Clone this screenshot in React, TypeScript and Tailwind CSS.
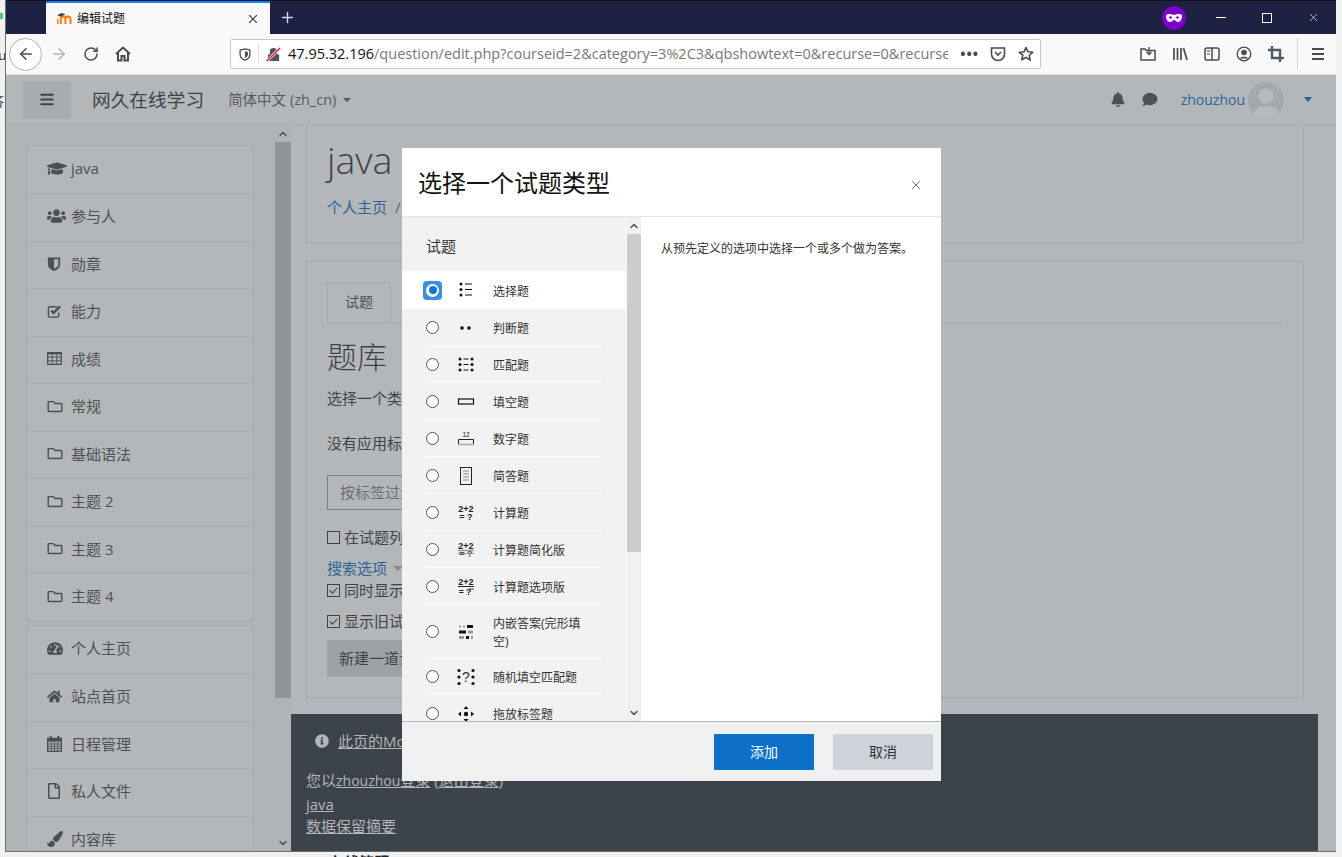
import { useState } from 'react'
import {
  FaBars, FaBell, FaComment, FaGraduationCap, FaHome, FaInfoCircle, FaPaintBrush,
  FaRegFile, FaRegFolder, FaTachometerAlt, FaUsers,
} from 'react-icons/fa'
import { ArrowLeft, ArrowRight, ChevronDown, ChevronUp, Plus, RotateCw, X } from 'lucide-react'

const sans = "font-['Open_Sans','Noto_Sans_CJK_SC',sans-serif]"

function ShieldHalf() {
  return (
    <svg viewBox="0 0 16 18" className="h-[16px] w-[14px]">
      <path d="M1 1.500h14v7.500c0 4-3 6.500-7 8-4-1.500-7-4-7-8z" fill="#4b4f54" />
      <path d="M8 3.500h5V9c0 2.500-2 4-5 5.500z" fill="#b3b7ba" />
    </svg>
  )
}

function CheckSquareIcon() {
  return (
    <svg viewBox="0 0 16 16" className="h-[15px] w-[15px]">
      <path d="M12.500 9v3.500a1.500 1.500 0 01-1.500 1.500H3a1.500 1.500 0 01-1.500-1.500v-8A1.500 1.500 0 013 3h8" fill="none" stroke="#4b4f54" strokeWidth="1.500" />
      <path d="M4.500 7l2.500 2.500L14 2.500" fill="none" stroke="#4b4f54" strokeWidth="2.500" />
    </svg>
  )
}

function TableIcon() {
  return (
    <svg viewBox="0 0 16 14" className="h-[13px] w-[15px]">
      <rect x="0.700" y="0.700" width="14.600" height="12.600" fill="none" stroke="#4b4f54" strokeWidth="1.400" />
      <path d="M0.700 1.500h14.600" stroke="#4b4f54" strokeWidth="2" />
      <path d="M1 5.500h14M1 9.500h14M5.500 1v12M10.500 1v12" stroke="#4b4f54" strokeWidth="1" />
    </svg>
  )
}

function CalendarIcon() {
  return (
    <svg viewBox="0 0 16 17" className="h-[16px] w-[15px]">
      <rect x="0.700" y="2.500" width="14.600" height="13.800" fill="none" stroke="#4b4f54" strokeWidth="1.400" />
      <path d="M1 4.500h14" stroke="#4b4f54" strokeWidth="3" />
      <path d="M4 0v4M12 0v4" stroke="#4b4f54" strokeWidth="2" />
      <path d="M1 8.500h14M1 11h14M1 13.500h14M4.500 6v10M8 6v10M11.500 6v10" stroke="#4b4f54" strokeWidth="0.900" />
    </svg>
  )
}

const courseLinks = [
  { icon: <FaGraduationCap className="h-[17px] w-[20px]" />, label: 'java' },
  { icon: <FaUsers className="h-[16px] w-[19px]" />, label: '参与人' },
  { icon: <ShieldHalf />, label: '勋章' },
  { icon: <CheckSquareIcon />, label: '能力' },
  { icon: <TableIcon />, label: '成绩' },
  { icon: <FaRegFolder className="h-[15px] w-[16px]" />, label: '常规' },
  { icon: <FaRegFolder className="h-[15px] w-[16px]" />, label: '基础语法' },
  { icon: <FaRegFolder className="h-[15px] w-[16px]" />, label: '主题 2' },
  { icon: <FaRegFolder className="h-[15px] w-[16px]" />, label: '主题 3' },
  { icon: <FaRegFolder className="h-[15px] w-[16px]" />, label: '主题 4' },
]

const siteLinks = [
  { icon: <FaTachometerAlt className="h-[15px] w-[16px]" />, label: '个人主页' },
  { icon: <FaHome className="h-[15px] w-[15px]" />, label: '站点首页' },
  { icon: <CalendarIcon />, label: '日程管理' },
  { icon: <FaRegFile className="h-[16px] w-[14px]" />, label: '私人文件' },
  { icon: <FaPaintBrush className="h-[16px] w-[16px]" />, label: '内容库' },
]

function SideBlock({ items }: { items: typeof courseLinks }) {
  return (
    <div className="border border-[#a5a9ac] bg-[#b3b7ba]">
      {items.map((item, i) => (
        <div
          key={item.label}
          className={`flex shrink-0 items-center pb-[2px] pl-[20px] text-[15px] text-[#4d5155] ${i > 0 ? 'h-[47.5px] border-t border-[#a5a9ac]' : 'h-[47px]'}`}
        >
          <span className="flex w-[24px] shrink-0 text-[#4b4f54]">{item.icon}</span>
          {item.label}
        </div>
      ))}
    </div>
  )
}

function Check({ checked }: { checked?: boolean }) {
  return (
    <span className="mr-[4px] flex h-[13px] w-[13px] shrink-0 items-center justify-center border border-[#3e4144]">
      {checked && (
        <svg viewBox="0 0 12 12" className="h-[11px] w-[11px]">
          <path d="M2 6l3 3 5-6" fill="none" stroke="#3e4144" strokeWidth="1.200" />
        </svg>
      )}
    </span>
  )
}

const dots = (pts: number[][], r = 1.500, fill = '#111') =>
  pts.map(([x, y]) => <circle key={`${x}-${y}`} cx={x} cy={y} r={r} fill={fill} />)

const qIcons: Record<string, React.ReactNode> = {
  multi: (
    <>
      {dots([[5, 4], [5, 9.500], [5, 15]])}
      <path d="M9 4h7M9 9.500h7M9 15h7" stroke="#111" strokeWidth="1" />
    </>
  ),
  tf: <>{dots([[6, 10], [13, 10]], 1.800)}</>,
  match: (
    <>
      {dots([[4, 4], [4, 9.500], [4, 15], [16, 4], [16, 9.500], [16, 15]])}
      <path d="M7.500 4h5M7.500 9.500h5M7.500 15h5" stroke="#111" strokeWidth="1" />
    </>
  ),
  short: <rect x="2.500" y="7" width="15" height="5" fill="none" stroke="#111" strokeWidth="1.200" />,
  num: (
    <>
      <text x="10" y="8" textAnchor="middle" fontSize="6.500" fill="#222" fontFamily="Liberation Sans, sans-serif">12</text>
      <path d="M2.500 15V10.500h15V15" fill="none" stroke="#222" strokeWidth="1" />
      <path d="M2 15.500h16" stroke="#aaa" strokeWidth="1.500" />
    </>
  ),
  essay: (
    <>
      <rect x="4.500" y="1.500" width="11" height="17" fill="none" stroke="#222" strokeWidth="1" />
      <path d="M7 5h6M7 8h6M7 11h6M7 14h6" stroke="#888" strokeWidth="1" />
    </>
  ),
  calc: (
    <>
      <text x="10" y="8.500" textAnchor="middle" fontSize="9" fontWeight="700" fill="#222" fontFamily="Liberation Sans, sans-serif">2+2</text>
      <text x="10" y="17" textAnchor="middle" fontSize="9" fontWeight="700" fill="#222" fontFamily="Liberation Sans, sans-serif">= ?</text>
    </>
  ),
  calcs: (
    <>
      <text x="10" y="8.500" textAnchor="middle" fontSize="9" fontWeight="700" fill="#222" fontFamily="Liberation Sans, sans-serif">2+2</text>
      <path d="M2 10.500h16" stroke="#999" strokeWidth="1.500" />
      <text x="10" y="17" textAnchor="middle" fontSize="9" fontWeight="700" fill="#555" fontFamily="Liberation Sans, sans-serif">= ?</text>
      <path d="M2 13.500h16" stroke="#999" strokeWidth="1" />
    </>
  ),
  calcm: (
    <>
      <text x="10" y="8" textAnchor="middle" fontSize="9" fontWeight="700" fill="#222" fontFamily="Liberation Sans, sans-serif">2+2</text>
      <path d="M2 9.500h16" stroke="#222" strokeWidth="1" />
      <path d="M13 12h5" stroke="#999" strokeWidth="2" />
      <text x="9" y="18" textAnchor="middle" fontSize="8.500" fontWeight="700" fill="#222" fontFamily="Liberation Sans, sans-serif">= ?</text>
    </>
  ),
  cloze: (
    <>
      <path d="M3 3.500h2v2H3zM7 3.500h2v2H7z" fill="#999" />
      <path d="M11 3h6v3h-6z" fill="#111" />
      <path d="M3 8.500h7v3H3z" fill="#111" />
      <path d="M12 8.500h5v3h-5z" fill="#999" />
      <path d="M3 14h5v3H3z" fill="#999" />
      <path d="M10 14h3v3h-3z" fill="#111" />
      <path d="M15 14h2v3h-2z" fill="#999" />
    </>
  ),
  rand: (
    <>
      {dots([[3, 3.500], [3, 10], [3, 16.500], [17, 3.500], [17, 10], [17, 16.500]], 1.600)}
      <text x="10" y="15" textAnchor="middle" fontSize="14" fill="#333" fontFamily="Liberation Sans, sans-serif">?</text>
    </>
  ),
  move: (
    <>
      <path d="M10 2l2.500 3h-5zM10 18l2.500-3h-5zM2 10l3-2.500v5zM18 10l-3-2.500v5z" fill="#111" />
      <circle cx="10" cy="10" r="2.200" fill="#111" />
    </>
  ),
}

const questionTypes = [
  { id: 'multi', label: '选择题', h: 'h-[38px]' },
  { id: 'tf', label: '判断题', h: 'h-[37px]' },
  { id: 'match', label: '匹配题', h: 'h-[37px]' },
  { id: 'short', label: '填空题', h: 'h-[37px]' },
  { id: 'num', label: '数字题', h: 'h-[37px]' },
  { id: 'essay', label: '简答题', h: 'h-[37px]' },
  { id: 'calc', label: '计算题', h: 'h-[37px]' },
  { id: 'calcs', label: '计算题简化版', h: 'h-[37px]' },
  { id: 'calcm', label: '计算题选项版', h: 'h-[37px]' },
  { id: 'cloze', label: '内嵌答案(完形填空)', h: 'h-[53px]' },
  { id: 'rand', label: '随机填空匹配题', h: 'h-[37px]' },
  { id: 'move', label: '拖放标签题', h: 'h-[37px]' },
]

function QuestionRow({ q, selected }: { q: (typeof questionTypes)[number]; selected: boolean }) {
  return (
    <div className={`relative flex shrink-0 items-center pl-[24px] ${q.h} ${selected ? 'bg-white' : ''}`}>
      {selected ? (
        <span className="-ml-[3px] mr-[-3px] flex h-[19px] w-[19px] shrink-0 items-center justify-center rounded-[4px] bg-[#3d8fdd]">
          <span className="flex h-[13px] w-[13px] items-center justify-center rounded-full bg-white">
            <span className="h-[8px] w-[8px] rounded-full bg-[#1476d2]" />
          </span>
        </span>
      ) : (
        <span className="h-[13px] w-[13px] shrink-0 rounded-full border border-[#555] bg-white" />
      )}
      <svg viewBox="0 0 20 20" className="ml-[17px] h-[20px] w-[20px] shrink-0">
        {qIcons[q.id]}
      </svg>
      <span className={`ml-[17px] w-[100px] text-[12px] leading-[18px] text-[#333] ${selected ? 'pt-[4px]' : 'pt-[2px]'}`}>{q.label}</span>
      {q.id !== 'multi' && q.id !== 'move' && (
        <span className="absolute bottom-0 left-[24px] h-px w-[175px] bg-white" />
      )}
    </div>
  )
}

function MoodleFavicon() {
  return (
    <svg viewBox="0 0 16 14" className="h-[13px] w-[15px]">
      <path d="M4 13V7.500C4 6 5 5 6.500 5S9 6 9 7.500V13M9 7.500C9 6 10 5 11.500 5S14.500 6 14.500 7.500V13" fill="none" stroke="#f98012" strokeWidth="2.200" />
      <path d="M0.500 7V13" stroke="#f98012" strokeWidth="2" />
      <path d="M0 3.500L5 1l4 1.500-5 2.500z" fill="#444" />
    </svg>
  )
}

function BrowserChrome() {
  const c = '#4a4a4f'
  return (
    <>
      <div className="flex h-[34px] shrink-0 border-t border-[#111] bg-[#1e2142]">
        <div className="w-[40px] shrink-0" />
        <div className="flex w-[224px] shrink-0 items-center border-t-2 border-[#0a84ff] bg-[#f9f9fa] pl-[11px] pr-[10px]">
          <MoodleFavicon />
          <span className="ml-[5px] flex-1 text-[12px] text-[#111]">编辑试题</span>
          <X className="h-[14px] w-[14px] text-[#444]" strokeWidth={2} />
        </div>
        <Plus className="ml-[9px] mt-[8px] h-[17px] w-[17px] text-[#d4d5dc]" strokeWidth={2} />
        <div className="flex-1" />
        <span className="mr-[12px] mt-[5px] flex h-[24px] w-[24px] items-center justify-center rounded-full bg-[#7b00cc]">
          <svg viewBox="0 0 16 8" className="w-[16px]">
            <path d="M0 2C0 0.500 1.500 0 4 0c2 0 3 1 4 1s2-1 4-1c2.500 0 4 .5 4 2 0 3-1.500 6-4 6-2 0-2.700-2-4-2s-2 2-4 2C1.500 8 0 5 0 2z" fill="#fff" />
            <circle cx="4.500" cy="3.500" r="1.300" fill="#7b00cc" />
            <circle cx="11.500" cy="3.500" r="1.300" fill="#7b00cc" />
          </svg>
        </span>
        <div className="flex">
          <span className="flex w-[46px] items-center justify-center">
            <span className="h-px w-[10px] bg-white" />
          </span>
          <span className="flex w-[46px] items-center justify-center">
            <span className="h-[10px] w-[10px] border border-white" />
          </span>
          <span className="flex w-[46px] items-center justify-center">
            <X className="h-[13px] w-[13px] text-white" strokeWidth={1.200} />
          </span>
        </div>
      </div>

      <div className="flex h-[41px] shrink-0 items-center border-b border-[#e1e1e2] bg-[#f9f9fa]">
        <span className="ml-[3px] flex h-[33px] w-[33px] items-center justify-center rounded-full border border-[#b1b1b3] bg-white">
          <ArrowLeft className="h-[18px] w-[18px]" color={c} strokeWidth={2} />
        </span>
        <ArrowRight className="ml-[8px] h-[18px] w-[18px] text-[#b4b4b6]" strokeWidth={2} />
        <RotateCw className="ml-[15px] h-[16px] w-[16px]" color={c} strokeWidth={2.200} />
        <svg viewBox="0 0 16 16" className="ml-[16px] h-[16px] w-[16px]">
          <path d="M1 8l7-6.500L15 8M3 7v7.500h3.500V10h3v4.500H13V7" fill="none" stroke={c} strokeWidth="2" />
        </svg>

        <div className="ml-[99px] flex h-[30px] w-[811px] shrink-0 items-center rounded-[2px] border border-[#c8c8c9] bg-white pr-[6px]">
          <svg viewBox="0 0 14 16" className="ml-[8px] h-[13px] w-[12px] shrink-0">
            <path d="M1 2.500L7 1l6 1.500V8c0 3.500-3 6-6 7-3-1-6-3.500-6-7z" fill="none" stroke={c} strokeWidth="1.600" />
            <path d="M7 4l3.500 1V8c0 2-1.500 3.500-3.500 4.300z" fill={c} />
          </svg>
          <span className="ml-[7px] h-[20px] w-px shrink-0 bg-[#ddd]" />
          <svg viewBox="0 0 16 16" className="ml-[7px] h-[15px] w-[15px] shrink-0">
            <path d="M4 8V5a4 4 0 018 0v3h2v7H2V8z" fill="#555" />
            <path d="M1 15L15 1" stroke="#f0f0f0" strokeWidth="3" />
            <path d="M1 15L15 1" stroke="#e22850" strokeWidth="1.600" />
          </svg>
          <span className="ml-[7px] flex-1 overflow-hidden whitespace-nowrap text-[14.500px] text-[#777]">
            <span className="text-[#111]">47.95.32.196</span>/question/edit.php?courseid=2&category=3%2C3&qbshowtext=0&recurse=0&recurse-
          </span>
          <span className="ml-[12px] text-[14px] font-bold leading-none tracking-[1px] text-[#4a4a4f]">•••</span>
          <svg viewBox="0 0 16 16" className="ml-[11px] h-[16px] w-[16px] shrink-0">
            <path d="M1.500 2h13v6a6.500 6.500 0 01-13 0z" fill="none" stroke={c} strokeWidth="1.600" />
            <path d="M5 6l3 3 3-3" fill="none" stroke={c} strokeWidth="1.600" />
          </svg>
          <svg viewBox="0 0 16 16" className="ml-[12px] h-[16px] w-[16px] shrink-0">
            <path d="M8 1.500l2 4.300 4.700.5-3.500 3.200 1 4.700L8 11.400 3.800 13.700l1-4.700L1.300 6.300 6 5.800z" fill="none" stroke={c} strokeWidth="1.600" strokeLinejoin="round" />
          </svg>
        </div>

        <div className="ml-[99px] flex items-center gap-[16px]">
          <svg viewBox="0 0 16 16" className="h-[16px] w-[16px]">
            <path d="M1 3h4l1.500 1.500H15V14H1z" fill="none" stroke={c} strokeWidth="1.500" />
            <path d="M9 1v7M6.500 6L9 8.500 11.500 6" fill="none" stroke={c} strokeWidth="1.300" />
          </svg>
          <svg viewBox="0 0 16 16" className="h-[16px] w-[16px]">
            <path d="M2 2v12M5.500 2v12M9 2v12M11.500 2l3.500 12" stroke={c} strokeWidth="1.700" fill="none" />
          </svg>
          <svg viewBox="0 0 16 16" className="h-[16px] w-[16px]">
            <rect x="1" y="2" width="14" height="12" rx="2" fill="none" stroke={c} strokeWidth="1.500" />
            <path d="M8 2v12" stroke={c} strokeWidth="1.500" />
            <path d="M3 5h3M3 8h3" stroke={c} strokeWidth="1" />
          </svg>
          <svg viewBox="0 0 16 16" className="h-[16px] w-[16px]">
            <circle cx="8" cy="8" r="6.800" fill="none" stroke={c} strokeWidth="1.300" />
            <circle cx="8" cy="6.500" r="2.800" fill={c} />
            <path d="M3.500 12.500c1-2.500 8-2.500 9 0z" fill={c} />
          </svg>
          <svg viewBox="0 0 16 16" className="h-[16px] w-[16px]">
            <path d="M4 0v12h12M0 4h12v12" fill="none" stroke="#4c5a6a" strokeWidth="2.400" />
          </svg>
        </div>
        <span className="ml-[13px] h-[32px] w-px bg-[#d6d6d7]" />
        <svg viewBox="0 0 16 16" className="ml-[12px] h-[16px] w-[16px]">
          <path d="M2 3h12M2 8h12M2 13h12" stroke={c} strokeWidth="1.800" />
        </svg>
      </div>
    </>
  )
}

function Navbar() {
  return (
    <div className="flex h-[50px] shrink-0 items-center border-b border-[#a9adb0] bg-[#b3b7ba]">
      <span className="ml-[17px] flex h-[38px] w-[48px] items-center justify-center bg-[#a8acaf]">
        <FaBars className="h-[15px] w-[14px] text-[#3f4347]" />
      </span>
      <span className="ml-[21px] pt-[1px] text-[18.700px] text-[#3f4347]">网久在线学习</span>
      <span className="ml-[24px] text-[14.500px] text-[#565a5e]">简体中文 (zh_cn)</span>
      <span className="ml-[7px] h-0 w-0 border-x-[4px] border-t-[4px] border-x-transparent border-t-[#565a5e]" />
      <div className="flex-1" />
      <FaBell className="h-[15px] w-[14px] text-[#4d5155]" />
      <FaComment className="ml-[17px] h-[15px] w-[16px] text-[#4d5155]" />
      <span className="ml-[23px] text-[14px] text-[#2e6397]">zhouzhou</span>
      <svg viewBox="0 0 36 36" className="ml-[3px] h-[36px] w-[36px]">
        <clipPath id="av"><circle cx="18" cy="18" r="18" /></clipPath>
        <g clipPath="url(#av)">
          <rect width="36" height="36" fill="#a6a9ac" />
          <circle cx="18" cy="14" r="7.500" fill="#b8bbbd" />
          <path d="M4 36c1-10 8-12 14-12s13 2 14 12z" fill="#b8bbbd" />
        </g>
      </svg>
      <span className="ml-[20px] mr-[24px] h-0 w-0 border-x-[4.500px] border-t-[5px] border-x-transparent border-t-[#2e6397]" />
    </div>
  )
}

function QuestionModal() {
  const [selected] = useState('multi')
  return (
    // sits over the dimmed page
    <div className="absolute left-[402px] top-[148px] flex h-[633px] w-[539px] flex-col bg-white">
      <div className="flex h-[69px] shrink-0 items-center justify-between border-b border-[#e3e4e8] pl-[16px] pr-[18px] pt-[1px]">
        <span className="text-[24px] text-[#111]">选择一个试题类型</span>
        <X className="mt-[5px] h-[14px] w-[14px] text-[#666]" strokeWidth={1.600} />
      </div>
      <div className="flex min-h-0 flex-1">
        <div className="flex w-[224px] shrink-0 flex-col overflow-hidden bg-[#f2f2f2]">
          <div className="flex h-[54px] shrink-0 items-center pl-[24px] pt-[4px] text-[15px] text-[#333]">试题</div>
          {questionTypes.map((q) => (
            <QuestionRow key={q.id} q={q} selected={q.id === selected} />
          ))}
        </div>
        <div className="flex w-[15px] shrink-0 flex-col border-l border-[#f8f8f8] bg-[#f0f0f0]">
          <span className="flex h-[17px] shrink-0 items-center justify-center">
            <ChevronUp className="h-[12px] w-[12px] text-[#505050]" strokeWidth={3} />
          </span>
          <span className="h-[318px] shrink-0 bg-[#cdcdcd]" />
          <span className="flex-1" />
          <span className="flex h-[17px] shrink-0 items-center justify-center">
            <ChevronDown className="h-[12px] w-[12px] text-[#505050]" strokeWidth={3} />
          </span>
        </div>
        <div className="flex-1 pl-[20px] pr-[10px] pt-[24px] text-[12px] leading-[16px] text-[#333]">
          从预先定义的选项中选择一个或多个做为答案。
        </div>
      </div>
      <div className="flex h-[60px] shrink-0 items-center justify-end gap-[19px] border-t border-[#b5b5b5] bg-[#f0f0f0] pr-[8px]">
        <button className="h-[36px] w-[100px] bg-[#0e6fc6] text-[14px] text-white">添加</button>
        <button className="h-[36px] w-[100px] bg-[#ced3db] text-[14px] text-[#333]">取消</button>
      </div>
    </div>
  )
}

export default function App() {
  return (
    <div className={`relative flex h-[857px] w-[1342px] overflow-hidden bg-[#f1f1f1] ${sans}`}>
      <div className="w-[5px] shrink-0 overflow-hidden bg-[#f0f0f0] pt-[13px] text-[13px] leading-[18px] text-[#333]">
        <div className="h-[6px] w-[3px] bg-[#57c27a]" />
        <div className="-ml-[7px] mt-[27px] whitespace-nowrap">ru</div>
        <div className="-ml-[9px] mt-[28px] whitespace-nowrap">答</div>
      </div>

      <div className="flex w-[1331px] shrink-0 flex-col">
        <div className="flex h-[852px] shrink-0 flex-col border-b border-l border-[#6b6e71]">
          <BrowserChrome />
          <Navbar />

          <div className="flex min-h-0 flex-1 bg-[#b3b7ba]">
            <aside className="flex w-[269px] shrink-0 flex-col gap-[3.500px] overflow-hidden bg-[#b0b4b7] pl-[20px] pr-[21px] pt-[20px]">
              <SideBlock items={courseLinks} />
              <SideBlock items={siteLinks} />
            </aside>
            <div className="flex w-[16px] shrink-0 flex-col bg-[#b0b4b7]">
              <span className="flex h-[17px] shrink-0 items-center justify-center">
                <ChevronUp className="h-[12px] w-[12px] text-[#4b4f52]" strokeWidth={3} />
              </span>
              <span className="h-[556px] shrink-0 bg-[#909497]" />
              <span className="flex-1" />
              <span className="flex h-[17px] shrink-0 items-center justify-center">
                <ChevronDown className="h-[12px] w-[12px] text-[#4b4f52]" strokeWidth={3} />
              </span>
            </div>

            <main className="flex min-w-0 flex-1 flex-col text-[15px] text-[#3f4347]">
              <div className="ml-[15px] mr-[32px] h-[118px] shrink-0 border border-t-0 border-[#a5a9ac] pl-[20px]">
                <h1 className="pt-[7px] text-[37.500px] font-light leading-[56px]">java</h1>
                <div className="mt-[8px] text-[15px] leading-[22px] text-[#2e6397]">
                  个人主页 <span className="ml-[4px] text-[#565a5e]">/</span>
                </div>
              </div>

              <div className="ml-[15px] mr-[32px] mt-[18px] h-[437px] shrink-0 border border-[#a5a9ac] px-[20px] pt-[20px]">
                <div className="h-[41px] border-b border-[#a5a9ac]">
                  <span className="flex h-[41px] w-[64px] items-center justify-center border border-b-0 border-[#a5a9ac] pb-[3px] text-[14px] text-[#4d5155]">试题</span>
                </div>
                <h2 className="mt-[11px] text-[30px] font-light leading-[45px]">题库</h2>
                <p className="mt-[8px] leading-[22px]">选择一个类别</p>
                <p className="mt-[23px] leading-[22px]">没有应用标签</p>
                <div className="mt-[21px] flex h-[35px] w-[300px] items-center border border-[#7d8185] pl-[12px] text-[#6a6e72]">按标签过滤</div>
                <label className="mt-[16px] flex h-[22px] items-center">
                  <Check />
                  在试题列表
                </label>
                <div className="mt-[9px] flex h-[22px] items-center text-[#2e6397]">
                  搜索选项
                  <span className="ml-[6px] h-0 w-0 border-x-[5px] border-t-[5px] border-x-transparent border-t-[#888c8f]" />
                </div>
                <label className="flex h-[22px] items-center">
                  <Check checked />
                  同时显示
                </label>
                <label className="mt-[9px] flex h-[22px] items-center">
                  <Check checked />
                  显示旧试题
                </label>
                <button className="mt-[8px] h-[37px] w-[200px] bg-[#9da2a7] pl-[12px] text-left text-[#3f4347]">新建一道试题</button>
              </div>

              <footer className="mr-[18px] mt-[16px] min-h-0 flex-1 overflow-hidden bg-[#3d434a] pl-[15px] text-[15px] text-[#b3b6b9]">
                <div className="ml-[9px] mt-[16px] flex h-[22px] items-center">
                  <FaInfoCircle className="h-[14px] w-[14px]" />
                  <span className="ml-[9px] underline">此页的Moodle文档</span>
                </div>
                <div className="mt-[17px] leading-[22px]">
                  您以<span className="underline"><span className="text-[14px]">zhouzhou</span>登录</span> (<span className="underline">退出登录</span>)
                </div>
                <div className="mt-[1px] leading-[22px] underline">java</div>
                <div className="leading-[22px] underline">数据保留摘要</div>
              </footer>
            </main>
          </div>
        </div>
        <div className="h-[5px] overflow-hidden pl-[324px] text-[15px] font-bold leading-[20px] text-[#222]">在线答题</div>
      </div>

      <div className="flex-1 bg-[#f1f1f1]" />

      <QuestionModal />
    </div>
  )
}
